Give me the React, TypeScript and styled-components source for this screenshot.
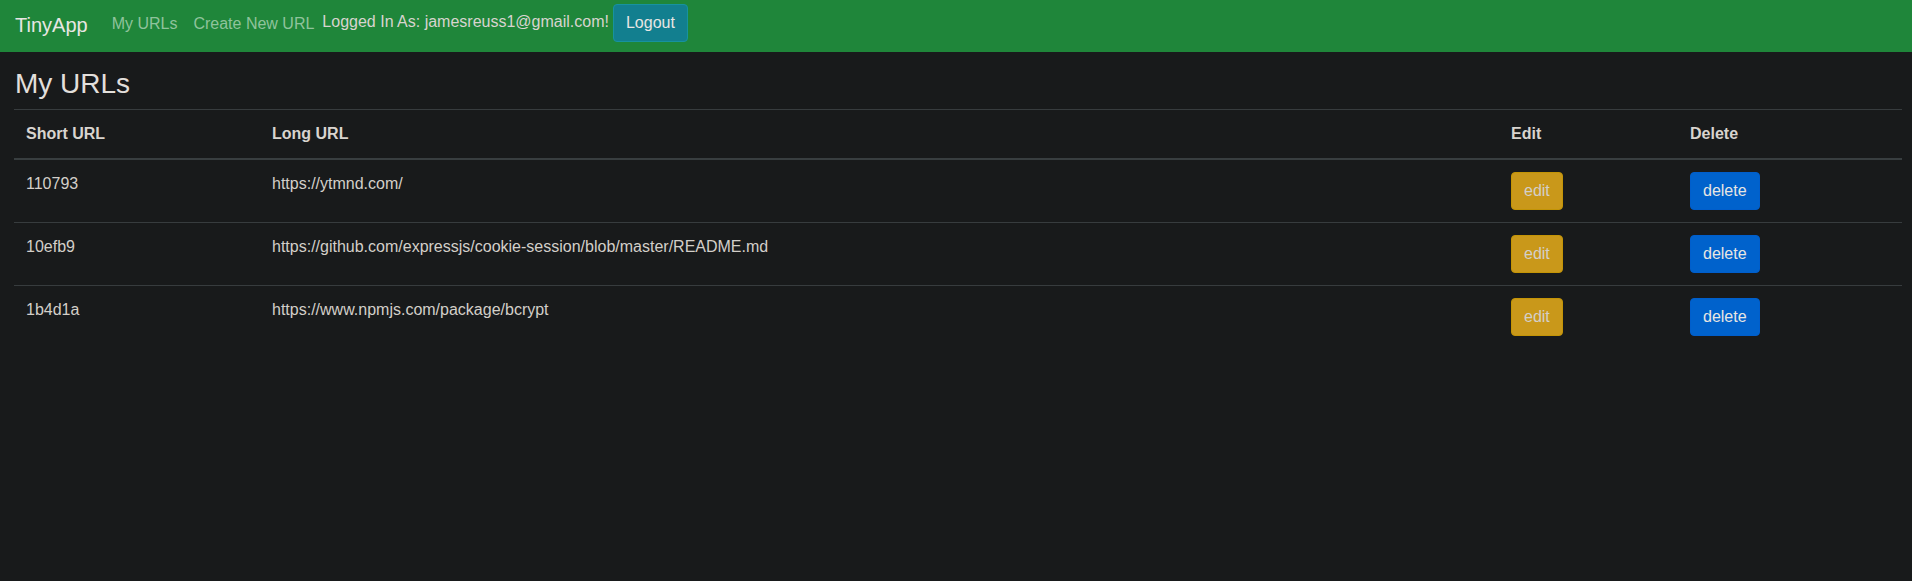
import React from "react";
import styled, { createGlobalStyle } from "styled-components";

const GlobalStyle = createGlobalStyle`
  html, body {
    margin: 0;
    padding: 0;
    background: #181a1b;
    color: #d3cfc9;
    font-family: "Liberation Sans", Arial, sans-serif;
    font-size: 16px;
    line-height: 1.5;
  }
  * { box-sizing: border-box; }
`;

const Navbar = styled.nav`
  display: flex;
  align-items: flex-start;
  height: 52px;
  padding: 0 15px;
  background: #1f863a;
`;

const Brand = styled.a`
  margin-top: 10px;
  margin-right: 16px;
  font-size: 20px;
  line-height: 30px;
  color: #e8e6e3;
  text-decoration: none;
`;

const NavList = styled.ul`
  display: flex;
  margin: 12px 0 0;
  padding: 0;
  list-style: none;
`;

const NavLink = styled.a`
  display: block;
  padding: 0 8px;
  line-height: 24px;
  color: #8fc39c;
  text-decoration: none;
`;

const UserArea = styled.div`
  display: flex;
  align-items: flex-start;
  gap: 4px;
`;

const UserText = styled.span`
  margin-top: 10px;
  line-height: 24px;
  color: #d8d4cf;
`;

const Button = styled.button<{ $variant: "info" | "warning" | "primary" }>`
  font-family: "Liberation Sans", Arial, sans-serif;
  font-size: 16px;
  line-height: 24px;
  padding: 6px 12px;
  border-radius: 4px;
  border: 1px solid
    ${(p) =>
      p.$variant === "info" ? "#17929f" : p.$variant === "warning" ? "#c39406" : "#005ecc"};
  background: ${(p) =>
    p.$variant === "info" ? "#127f8f" : p.$variant === "warning" ? "#c9981a" : "#0062cc"};
  color: ${(p) => (p.$variant === "warning" ? "#d3cfc9" : "#e8e6e3")};
  cursor: pointer;
`;

const LogoutButton = styled(Button)`
  margin-top: 4px;
`;

const Container = styled.main`
  padding: 15px 10px 0 14px;
`;

const Title = styled.h3`
  margin: 0 0 8px;
  padding-left: 1px;
  font-size: 28px;
  font-weight: 400;
  line-height: 1.2;
  color: #e2dfdb;
`;

const Table = styled.table`
  width: 1888px;
  border-collapse: collapse;
  table-layout: fixed;
`;

const Th = styled.th<{ $w: number }>`
  width: ${(p) => p.$w}px;
  padding: 12px;
  text-align: left;
  font-weight: 700;
  line-height: 24px;
  color: #d8d4cf;
  border-top: 1px solid #373c3e;
  border-bottom: 2px solid #383e40;
  vertical-align: bottom;
`;

const Td = styled.td`
  padding: 12px;
  line-height: 24px;
  vertical-align: top;
  border-top: 1px solid #373c3e;
  color: #d3cfc9;
`;

const rows = [
  { id: "110793", url: "https://ytmnd.com/" },
  { id: "10efb9", url: "https://github.com/expressjs/cookie-session/blob/master/README.md" },
  { id: "1b4d1a", url: "https://www.npmjs.com/package/bcrypt" },
];

export default function App() {
  return (
    <>
      <GlobalStyle />
      <Navbar>
        <Brand href="#">TinyApp</Brand>
        <NavList>
          <li>
            <NavLink href="#">My URLs</NavLink>
          </li>
          <li>
            <NavLink href="#">Create New URL</NavLink>
          </li>
        </NavList>
        <UserArea>
          <UserText>Logged In As: jamesreuss1@gmail.com!</UserText>
          <LogoutButton $variant="info">Logout</LogoutButton>
        </UserArea>
      </Navbar>
      <Container>
        <Title>My URLs</Title>
        <Table>
          <thead>
            <tr>
              <Th $w={246}>Short URL</Th>
              <Th $w={1239}>Long URL</Th>
              <Th $w={179}>Edit</Th>
              <Th $w={224}>Delete</Th>
            </tr>
          </thead>
          <tbody>
            {rows.map((r) => (
              <tr key={r.id}>
                <Td>{r.id}</Td>
                <Td>{r.url}</Td>
                <Td>
                  <Button $variant="warning">edit</Button>
                </Td>
                <Td>
                  <Button $variant="primary">delete</Button>
                </Td>
              </tr>
            ))}
          </tbody>
        </Table>
      </Container>
    </>
  );
}
